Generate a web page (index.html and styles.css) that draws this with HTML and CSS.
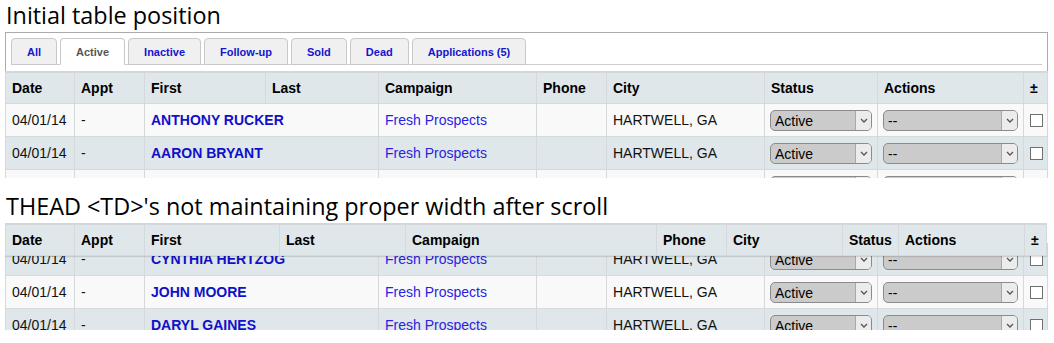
FILE: index.html
```html
<!DOCTYPE html>
<html lang="en">
<head>
    <meta charset="UTF-8">
    <meta name="viewport" content="width=device-width, initial-scale=1.0">
    <title>Leads table - fixed header after scroll</title>
    <link rel="stylesheet" href="styles.css">
</head>
<body>
    <h1 class="caption">Initial table position</h1>
    <div class="panel">
        <ul class="tabs">
            <li class="tab"><a href="#">All</a></li>
            <li class="tab active"><a href="#">Active</a></li>
            <li class="tab"><a href="#">Inactive</a></li>
            <li class="tab"><a href="#">Follow-up</a></li>
            <li class="tab"><a href="#">Sold</a></li>
            <li class="tab"><a href="#">Dead</a></li>
            <li class="tab"><a href="#">Applications (5)</a></li>
        </ul>
    </div>

    <div class="grid">
        <table class="leads">
            <colgroup>
                <col style="width:70px"><col style="width:70px"><col style="width:121px"><col style="width:113px">
                <col style="width:158px"><col style="width:70px"><col style="width:158px"><col style="width:113px">
                <col style="width:146px"><col style="width:24px">
            </colgroup>
            <thead>
                <tr>
                    <th>Date</th><th>Appt</th><th>First</th><th>Last</th><th>Campaign</th>
                    <th>Phone</th><th>City</th><th>Status</th><th>Actions</th><th>±</th>
                </tr>
            </thead>
            <tbody>
                <tr>
                    <td>04/01/14</td>
                    <td>-</td>
                    <td colspan="2"><a class="name" href="#">ANTHONY RUCKER</a></td>
                    <td><a class="campaign" href="#">Fresh Prospects</a></td>
                    <td></td>
                    <td>HARTWELL, GA</td>
                    <td class="pick"><span class="select status"><select><option>Active</option></select><span class="arrow"><svg width="8" height="5" viewBox="0 0 8 5"><path d="M1 1l3 3 3-3" fill="none" stroke="#555" stroke-width="1.3"/></svg></span></span></td>
                    <td class="pick"><span class="select action"><select><option>--</option></select><span class="arrow"><svg width="8" height="5" viewBox="0 0 8 5"><path d="M1 1l3 3 3-3" fill="none" stroke="#555" stroke-width="1.3"/></svg></span></span></td>
                    <td class="check"><input type="checkbox"></td>
                </tr>
                <tr class="alt">
                    <td>04/01/14</td>
                    <td>-</td>
                    <td colspan="2"><a class="name" href="#">AARON BRYANT</a></td>
                    <td><a class="campaign" href="#">Fresh Prospects</a></td>
                    <td></td>
                    <td>HARTWELL, GA</td>
                    <td class="pick"><span class="select status"><select><option>Active</option></select><span class="arrow"><svg width="8" height="5" viewBox="0 0 8 5"><path d="M1 1l3 3 3-3" fill="none" stroke="#555" stroke-width="1.3"/></svg></span></span></td>
                    <td class="pick"><span class="select action"><select><option>--</option></select><span class="arrow"><svg width="8" height="5" viewBox="0 0 8 5"><path d="M1 1l3 3 3-3" fill="none" stroke="#555" stroke-width="1.3"/></svg></span></span></td>
                    <td class="check"><input type="checkbox"></td>
                </tr>
                <!-- next row, only its top edge shows before the scroll area ends -->
                <tr>
                    <td></td>
                    <td></td>
                    <td colspan="2"></td>
                    <td></td>
                    <td></td>
                    <td></td>
                    <td class="pick"><span class="select status"><select><option></option></select><span class="arrow"><svg width="8" height="5" viewBox="0 0 8 5"><path d="M1 1l3 3 3-3" fill="none" stroke="#555" stroke-width="1.3"/></svg></span></span></td>
                    <td class="pick"><span class="select action"><select><option></option></select><span class="arrow"><svg width="8" height="5" viewBox="0 0 8 5"><path d="M1 1l3 3 3-3" fill="none" stroke="#555" stroke-width="1.3"/></svg></span></span></td>
                    <td class="check"><input type="checkbox"></td>
                </tr>
            </tbody>
        </table>
    </div>

    <h1 class="caption second">THEAD &lt;TD&gt;'s not maintaining proper width after scroll</h1>
    <div class="grid scrolled">
        <table class="leads fixed-head">
            <colgroup>
                <col style="width:70px"><col style="width:70px"><col style="width:135px"><col style="width:126px">
                <col style="width:251px"><col style="width:70px"><col style="width:116px"><col style="width:56px">
                <col style="width:126px"><col style="width:22px">
            </colgroup>
            <thead>
                <tr>
                    <th>Date</th><th>Appt</th><th>First</th><th>Last</th><th>Campaign</th>
                    <th>Phone</th><th>City</th><th>Status</th><th>Actions</th><th>±</th>
                </tr>
            </thead>
        </table>
        <table class="leads">
            <colgroup>
                <col style="width:70px"><col style="width:70px"><col style="width:121px"><col style="width:113px">
                <col style="width:158px"><col style="width:70px"><col style="width:158px"><col style="width:113px">
                <col style="width:146px"><col style="width:24px">
            </colgroup>
            <tbody>
                <tr class="alt">
                    <td>04/01/14</td>
                    <td>-</td>
                    <td colspan="2"><a class="name" href="#">CYNTHIA HERTZOG</a></td>
                    <td><a class="campaign" href="#">Fresh Prospects</a></td>
                    <td></td>
                    <td>HARTWELL, GA</td>
                    <td class="pick"><span class="select status"><select><option>Active</option></select><span class="arrow"><svg width="8" height="5" viewBox="0 0 8 5"><path d="M1 1l3 3 3-3" fill="none" stroke="#555" stroke-width="1.3"/></svg></span></span></td>
                    <td class="pick"><span class="select action"><select><option>--</option></select><span class="arrow"><svg width="8" height="5" viewBox="0 0 8 5"><path d="M1 1l3 3 3-3" fill="none" stroke="#555" stroke-width="1.3"/></svg></span></span></td>
                    <td class="check"><input type="checkbox"></td>
                </tr>
                <tr>
                    <td>04/01/14</td>
                    <td>-</td>
                    <td colspan="2"><a class="name" href="#">JOHN MOORE</a></td>
                    <td><a class="campaign" href="#">Fresh Prospects</a></td>
                    <td></td>
                    <td>HARTWELL, GA</td>
                    <td class="pick"><span class="select status"><select><option>Active</option></select><span class="arrow"><svg width="8" height="5" viewBox="0 0 8 5"><path d="M1 1l3 3 3-3" fill="none" stroke="#555" stroke-width="1.3"/></svg></span></span></td>
                    <td class="pick"><span class="select action"><select><option>--</option></select><span class="arrow"><svg width="8" height="5" viewBox="0 0 8 5"><path d="M1 1l3 3 3-3" fill="none" stroke="#555" stroke-width="1.3"/></svg></span></span></td>
                    <td class="check"><input type="checkbox"></td>
                </tr>
                <tr class="alt">
                    <td>04/01/14</td>
                    <td>-</td>
                    <td colspan="2"><a class="name" href="#">DARYL GAINES</a></td>
                    <td><a class="campaign" href="#">Fresh Prospects</a></td>
                    <td></td>
                    <td>HARTWELL, GA</td>
                    <td class="pick"><span class="select status"><select><option>Active</option></select><span class="arrow"><svg width="8" height="5" viewBox="0 0 8 5"><path d="M1 1l3 3 3-3" fill="none" stroke="#555" stroke-width="1.3"/></svg></span></span></td>
                    <td class="pick"><span class="select action"><select><option>--</option></select><span class="arrow"><svg width="8" height="5" viewBox="0 0 8 5"><path d="M1 1l3 3 3-3" fill="none" stroke="#555" stroke-width="1.3"/></svg></span></span></td>
                    <td class="check"><input type="checkbox"></td>
                </tr>
            </tbody>
        </table>
    </div>
</body>
</html>
```

FILE: styles.css
```css
:root {
    --header-bg: #dfe7ea;
    --row-bg: #f9f9f9;
    --line: #d5d9db;
    --link: #1010c8;
    --campaign: #2a22e2;
}

body {
    margin: 0;
    font-family: "Liberation Sans", Arial, sans-serif;
    font-size: 14px;
    color: #111;
    background: #fff;
}

.caption {
    margin: 0 0 2px 6px;
    font-family: "Open Sans", sans-serif;
    font-size: 23.4px;
    font-weight: normal;
    line-height: 30px;
    color: #000;
}

.caption.second {
    margin-top: 13px;
}

/* tab strip */
.panel {
    margin: 0 6px 0 5px;
    padding: 5px 5px 6px;
    border: 1px solid #ababab;
    border-bottom: 0;
}

.tabs {
    display: flex;
    gap: 3px;
    margin: 0;
    padding: 0;
    list-style: none;
    border-bottom: 1px solid #cfcfcf;
}

.tab {
    margin-bottom: -1px;
}

.tab a {
    display: block;
    height: 25px;
    line-height: 26px;
    padding: 0 15px;
    border: 1px solid #c8c8c8;
    border-radius: 4px 4px 0 0;
    background: #f0f0f0;
    color: #1414d2;
    font-size: 11px;
    font-weight: bold;
    text-decoration: none;
}

.tab.active a {
    background: #fff;
    border-bottom-color: #fff;
    color: #555;
}

/* lead table */
.grid {
    position: relative;
    box-sizing: border-box;
    width: 1043px;
    height: 107px;
    margin-left: 5px;
    overflow: hidden;
}

.grid.scrolled {
    padding-top: 20px;
}

.leads {
    width: 100%;
    table-layout: fixed;
    border-collapse: separate;
    border-spacing: 0;
}

.leads th,
.leads td {
    padding: 0 6px;
    border-right: 1px solid var(--line);
    border-bottom: 1px solid var(--line);
    text-align: left;
    white-space: nowrap;
    overflow: hidden;
}

.leads th:first-child,
.leads td:first-child {
    border-left: 1px solid var(--line);
}

.leads thead tr {
    height: 33px;
}

.leads th {
    background: var(--header-bg);
    border-top: 2px solid #d3d7d9;
    font-weight: bold;
    color: #000;
}

.leads tbody tr {
    height: 33px;
    background: var(--row-bg);
}

.leads tbody tr.alt {
    background: var(--header-bg);
}

.fixed-head {
    position: absolute;
    top: 0;
    left: 0;
    z-index: 2;
    width: 1042px;
    box-shadow: 0 1px 1px rgba(0, 0, 0, 0.12);
}

.name {
    color: var(--link);
    font-weight: bold;
    text-decoration: none;
}

.campaign {
    color: var(--campaign);
    text-decoration: none;
}

.leads td.pick {
    padding: 0 5px;
}

.select {
    position: relative;
    display: inline-block;
    vertical-align: middle;
    height: 21px;
}

.select.status {
    width: 102px;
}

.select.action {
    width: 135px;
}

.select select {
    -webkit-appearance: none;
    appearance: none;
    box-sizing: border-box;
    width: 100%;
    height: 21px;
    margin: 0;
    padding: 1px 0 0 4px;
    border: 1px solid #8b8b8b;
    border-radius: 5px;
    background: #cbcbcb;
    font: 14px "Liberation Sans", Arial, sans-serif;
    color: #000;
}

.select .arrow {
    position: absolute;
    top: 1px;
    right: 1px;
    bottom: 1px;
    width: 15px;
    display: flex;
    align-items: center;
    justify-content: center;
    background: #ececec;
    border-left: 1px solid #a9a9a9;
    border-radius: 0 4px 4px 0;
    pointer-events: none;
}

.leads td.check {
    padding: 0;
}

.check input {
    -webkit-appearance: none;
    appearance: none;
    display: block;
    width: 13px;
    height: 13px;
    margin: 0 0 0 6px;
    border: 1px solid #6f6f6f;
    border-radius: 0;
    background: #fff;
}
```
